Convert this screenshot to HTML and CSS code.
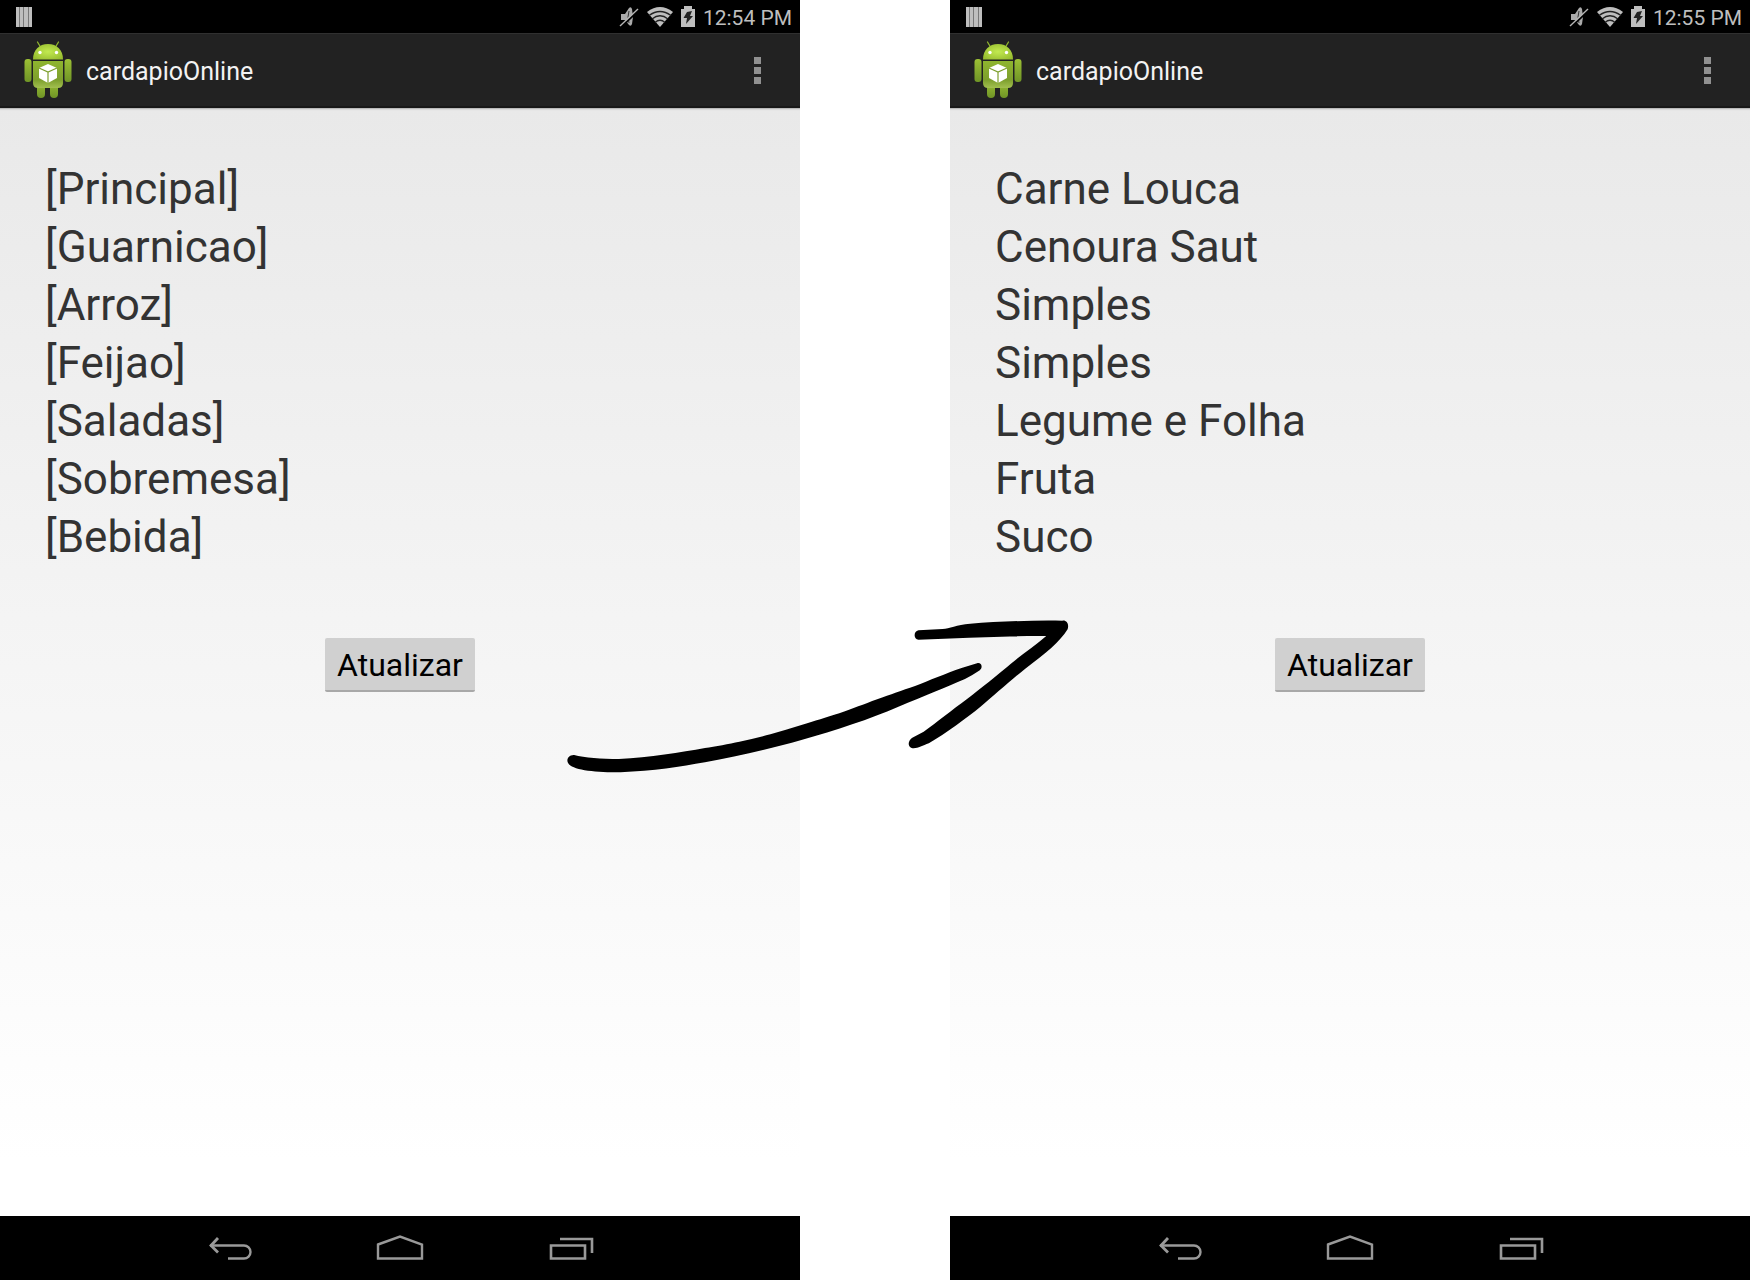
FILE: index.html
```
<!DOCTYPE html>
<html lang="pt-BR">
<head>
<meta charset="utf-8">
<title>cardapioOnline</title>
<link rel="stylesheet" href="styles.css">
</head>
<body>
<!-- Shared icon artwork -->
<svg class="defs" width="0" height="0" aria-hidden="true">
  <defs>
    <linearGradient id="limb" x1="0" y1="0" x2="0" y2="1"><stop offset="0" stop-color="#9cc035"/><stop offset="1" stop-color="#6f9426"/></linearGradient>
    <radialGradient id="dome" cx=".5" cy=".5" r=".6"><stop offset="0" stop-color="#c2ea50"/><stop offset="1" stop-color="#98be30"/></radialGradient>
    <linearGradient id="torso" x1="0" y1="0" x2="0" y2="1"><stop offset="0" stop-color="#8fb52e"/><stop offset=".7" stop-color="#7d9f2d"/><stop offset="1" stop-color="#a3c050"/></linearGradient>
  </defs>
  <symbol id="bars" viewBox="0 0 16 20">
    <path d="M0 0h16v20H0z" fill="#777"/><path d="M0 0h3v20H0zM4 0h3v20H4zM8 0h4v20H8zM13 0h3v20h-3z" fill="#bebebe"/>
  </symbol>
  <symbol id="muted" viewBox="0 0 20 22">
    <path d="M2 8h4l4-6q2-2 3 1l1 8-1 7q-1 3-3 1l-4-5H2z" fill="#aaa"/>
    <path d="M10 5q-2 6 0 12" fill="none" stroke="#333" stroke-width="1"/>
    <path d="M2 21 20 4" stroke="#000" stroke-width="2"/><path d="M1 20 19 3" stroke="#b5b5b5" stroke-width="1.4"/>
  </symbol>
  <symbol id="wifi" viewBox="0 0 26 20">
    <path d="M0 5Q13-5 26 5L13 20z" fill="#bebebe"/>
    <path d="M2 8.500Q13 .5 24 8.500M5 12Q13 5.500 21 12M8 15.500Q13 11 18 15.500" fill="none" stroke="#222" stroke-width="1.300"/>
  </symbol>
  <symbol id="battery" viewBox="0 0 14 21">
    <path d="M3 0h8v3h3v18H0V3h3z" fill="#bebebe"/><path d="m6 6 5-1-2 5h3l-7 8 1-6H2.500z" fill="#222"/>
  </symbol>
  <symbol id="robot" viewBox="0 0 48 58">
    <path d="m13.500 1 3 5M34.500 1l-3 5" stroke="#8fb52e" stroke-width="1.300" stroke-linecap="round"/>
    <rect x="13" y="40" width="8" height="17" rx="4" fill="url(#limb)"/><rect x="26" y="40" width="8" height="17" rx="4" fill="url(#limb)"/>
    <rect x=".5" y="18" width="7" height="23" rx="3" fill="url(#limb)"/><rect x="40.500" y="18" width="7" height="23" rx="3" fill="url(#limb)"/>
    <path d="M9 18.500C9 9 15 3 24 3s15 6 15 15.500z" fill="url(#dome)"/>
    <path d="M9 20h30V42q0 5-5 5H14q-5 0-5-5z" fill="url(#torso)"/>
    <circle cx="16" cy="11.500" r="1.700" fill="#fff"/><circle cx="32.500" cy="11.500" r="1.700" fill="#fff"/>
    <path d="m24 23 9 4v10l-9 5-9-5V27z" fill="#fff"/><path d="m15 27 9 4 9-4M24 31v11" fill="none" stroke="#7d9f2d" stroke-width="1.200"/>
  </symbol>
  <symbol id="dots" viewBox="0 0 7 27">
    <path d="M0 0h7v7H0zM0 10h7v7H0zM0 20h7v7H0z" fill="#919191"/>
  </symbol>
  <symbol id="back" viewBox="0 0 48 26">
    <path d="M4 10.500h34a6.500 6.500 0 0 1 0 13H22" fill="none" stroke="#999" stroke-width="2.400"/><path d="M12 3 5 10.500l7 7" fill="none" stroke="#999" stroke-width="2.800"/>
  </symbol>
  <symbol id="home" viewBox="0 0 48 26">
    <path d="M2 9.500 24 1.500l22 8v14H2z" fill="none" stroke="#999" stroke-width="2.400"/>
  </symbol>
  <symbol id="recent" viewBox="0 0 48 26">
    <path d="M5 10.500h34v13H5zM14 4h32v14" fill="none" stroke="#999" stroke-width="2.600"/>
  </symbol>
</svg>

<main class="board">
  <section class="phone">
    <div class="status">
      <svg class="icon-bars"><use href="#bars"/></svg>
      <div class="status-right">
        <svg class="icon-muted"><use href="#muted"/></svg>
        <svg class="icon-wifi"><use href="#wifi"/></svg>
        <svg class="icon-battery"><use href="#battery"/></svg>
        <time>12:54 PM</time>
      </div>
    </div>
    <header class="appbar">
      <svg class="icon-robot"><use href="#robot"/></svg>
      <h1>cardapioOnline</h1>
      <button class="overflow" type="button" aria-label="Menu"><svg class="icon-dots"><use href="#dots"/></svg></button>
    </header>
    <div class="screen">
      <ul class="menu">
        <li>[Principal]</li><li>[Guarnicao]</li><li>[Arroz]</li><li>[Feijao]</li><li>[Saladas]</li><li>[Sobremesa]</li><li>[Bebida]</li>
      </ul>
      <button class="refresh" type="button">Atualizar</button>
    </div>
    <nav class="navbar">
      <button type="button" aria-label="Voltar"><svg><use href="#back"/></svg></button>
      <button type="button" aria-label="Início"><svg><use href="#home"/></svg></button>
      <button type="button" aria-label="Recentes"><svg><use href="#recent"/></svg></button>
    </nav>
  </section>

  <section class="phone">
    <div class="status">
      <svg class="icon-bars"><use href="#bars"/></svg>
      <div class="status-right">
        <svg class="icon-muted"><use href="#muted"/></svg>
        <svg class="icon-wifi"><use href="#wifi"/></svg>
        <svg class="icon-battery"><use href="#battery"/></svg>
        <time>12:55 PM</time>
      </div>
    </div>
    <header class="appbar">
      <svg class="icon-robot"><use href="#robot"/></svg>
      <h1>cardapioOnline</h1>
      <button class="overflow" type="button" aria-label="Menu"><svg class="icon-dots"><use href="#dots"/></svg></button>
    </header>
    <div class="screen">
      <ul class="menu">
        <li>Carne Louca</li><li>Cenoura Saut</li><li>Simples</li><li>Simples</li><li>Legume e Folha</li><li>Fruta</li><li>Suco</li>
      </ul>
      <button class="refresh" type="button">Atualizar</button>
    </div>
    <nav class="navbar">
      <button type="button" aria-label="Voltar"><svg><use href="#back"/></svg></button>
      <button type="button" aria-label="Início"><svg><use href="#home"/></svg></button>
      <button type="button" aria-label="Recentes"><svg><use href="#recent"/></svg></button>
    </nav>
  </section>

  <!-- Hand-drawn arrow from the first state to the second -->
  <svg class="arrow" viewBox="0 0 1568 570" preserveAspectRatio="none" aria-hidden="true">
    <path d="M70 465C54 464 46 480 53 490C64 510 130 518 205 517C300 513 380 500 450 487C540 471 640 446 730 420C830 391 930 357 1010 321C1090 287 1150 261 1205 237Q1230 224 1248 211C1259 200 1251 186 1240 190L1195 204C1150 220 1100 242 1060 258C1020 272 990 283 950 298C910 313 880 326 840 340C800 353 770 363 730 375C700 384 670 394 640 403C610 411 580 419 550 425C520 431 480 440 450 444C380 457 290 472 200 477C150 477 100 473 70 465z"/>
    <path d="M1070 91C1055 94 1055 118 1070 119C1200 115 1320 107 1441 108C1410 137 1370 163 1340 190C1300 224 1250 267 1210 298C1170 328 1120 370 1085 395L1052 413C1040 420 1037 440 1050 444C1065 447 1080 438 1100 430C1150 399 1210 354 1250 320C1290 286 1340 239 1380 206C1440 160 1480 126 1503 88C1508 72 1500 60 1488 62C1400 60 1300 65 1220 71C1180 75 1160 85 1140 87z"/>
  </svg>
</main>
</body>
</html>
```
FILE: styles.css
```
* { box-sizing: border-box; }

body {
  margin: 0;
  background: #fff;
  font-family: Roboto, "Noto Sans", sans-serif;
}

button {
  border: 0;
  padding: 0;
  background: none;
  font: inherit;
}

svg { display: block; }

.defs { position: absolute; }

.board {
  position: relative;
  display: grid;
  grid-template-columns: 1fr 1fr;
  gap: 150px;
  min-height: 100vh;
  padding: 0 1px 1px 0;
}

.phone {
  display: flex;
  flex-direction: column;
  min-width: 0;
}

.status {
  display: flex;
  justify-content: space-between;
  align-items: center;
  height: 33px;
  padding: 0 8px 0 16px;
  background: #000;
  color: #bebebe;
  font-size: 21px;
  line-height: 24px;
}

.status time { padding-top: 2px; }

.status-right {
  display: flex;
  align-items: center;
  gap: 8px;
}

.icon-bars { width: 16px; height: 20px; }
.icon-muted { width: 20px; height: 22px; }
.icon-wifi { width: 26px; height: 20px; }
.icon-battery { width: 14px; height: 21px; }

.appbar {
  display: flex;
  align-items: center;
  gap: 14px;
  height: 75px;
  padding: 0 39px 0 24px;
  border-top: 1px solid #303030;
  border-bottom: 2px solid #181818;
  background: #222;
  color: #f3f3f3;
}

.appbar h1 {
  flex: 1;
  margin: 0;
  padding-top: 3px;
  font-size: 25px;
  font-weight: 400;
  line-height: 32px;
}

.icon-robot { width: 48px; height: 58px; }
.icon-dots { width: 7px; height: 27px; }

.screen {
  flex: 1;
  display: flex;
  flex-direction: column;
  align-items: center;
  padding: 52px 45px;
  background: linear-gradient(#e9e9e9, #f4f4f4 46%, #fff 95%);
  box-shadow: inset 0 3px 2px -2px #aaa;
}

.menu {
  align-self: stretch;
  margin: 0 0 72px;
  padding: 0;
  list-style: none;
  color: #333;
  font-size: 44px;
  line-height: 58px;
}

.refresh {
  min-width: 150px;
  height: 54px;
  padding: 3px 10px 0;
  border-bottom: 2px solid #a8a8a8;
  border-radius: 2px;
  background: #d0d0d0;
  color: #000;
  font-size: 32px;
  line-height: 49px;
}

.navbar {
  display: flex;
  justify-content: center;
  align-items: center;
  gap: 122px;
  height: 64px;
  background: #000;
}

.navbar svg { width: 48px; height: 26px; }

.arrow {
  position: absolute;
  top: 600px;
  left: calc(50% - 326px);
  width: 540px;
  height: 190px;
  pointer-events: none;
}
```
